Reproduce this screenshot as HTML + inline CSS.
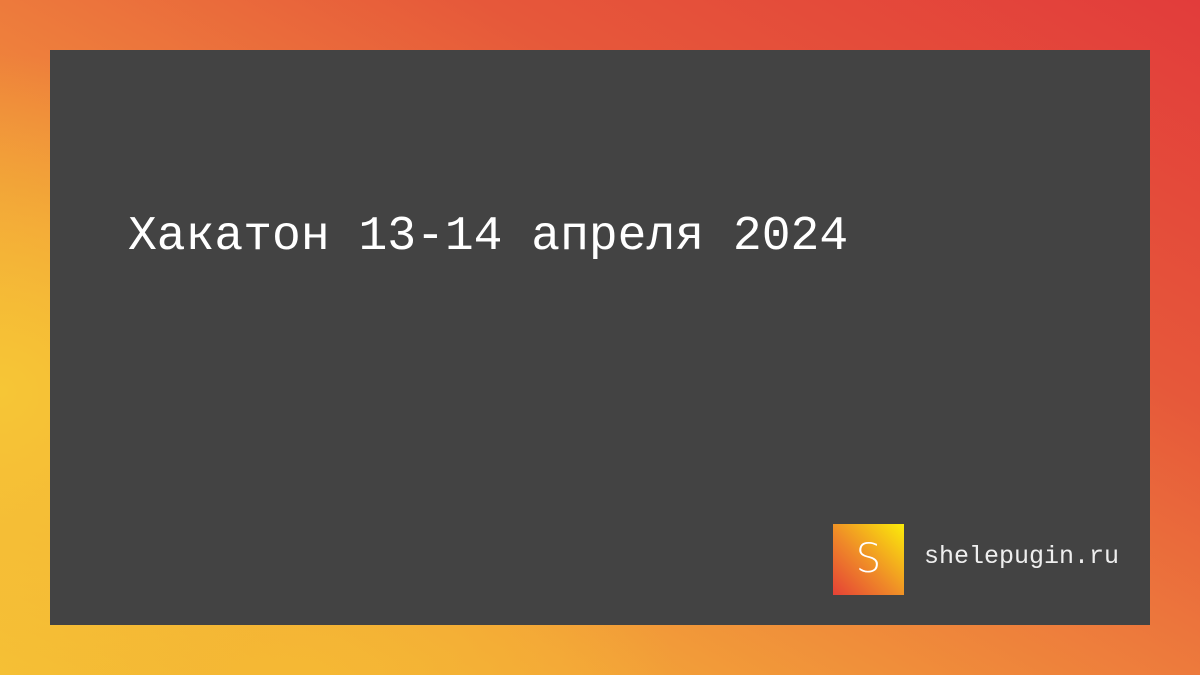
<!DOCTYPE html>
<html><head><meta charset="utf-8"><style>
html,body{margin:0;padding:0}
body{width:1200px;height:675px;position:relative;overflow:hidden;
background:
radial-gradient(ellipse 500px 450px at 0% 58%, rgba(246,198,54,1) 0%, rgba(246,198,54,0) 75%),
radial-gradient(ellipse 500px 250px at 25% 100%, rgba(245,185,52,0.9) 0%, rgba(245,185,52,0) 75%),
linear-gradient(to bottom left,#e23c3b 0%,#e6583a 30%,#ed7a3c 50%,#f3a338 75%,#f5c035 100%);}
.panel{position:absolute;left:50px;top:50px;width:1100px;height:575px;background:#434343}
.t{position:absolute;left:128px;top:210px;font:48px "Liberation Mono",monospace;color:#fff;white-space:nowrap}
.logo{position:absolute;left:833px;top:524px;width:71px;height:71px;background:linear-gradient(to top right,#e54136 0%,#ef8a28 45%,#fbed0a 100%);color:#fff;font:300 40px "DejaVu Sans","Liberation Sans",sans-serif;text-align:center;line-height:71px}
.s{position:absolute;left:924px;top:542px;font:25px "Liberation Mono",monospace;color:#eee;white-space:nowrap}
</style></head><body>
<div class="panel"></div>
<div class="t">Хакатон 13-14 апреля 2024</div>
<div class="logo">S</div>
<div class="s">shelepugin.ru</div>
</body></html>
